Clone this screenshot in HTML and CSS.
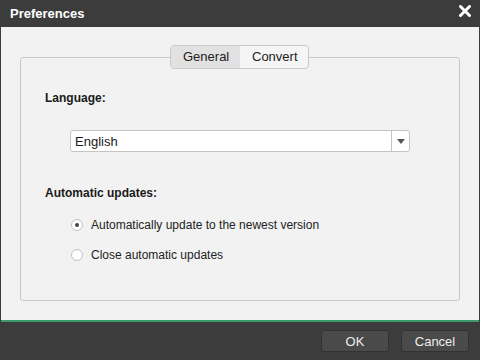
FILE: index.html
```html
<!DOCTYPE html>
<html lang="en">
<head>
    <meta charset="UTF-8">
    <title>Preferences</title>
    <link rel="stylesheet" href="styles.css">
</head>
<body>
    <div class="dialog">
        <div class="titlebar">
            <span class="title">Preferences</span>
            <svg class="close" width="12" height="12" viewBox="0 0 12 12">
                <path d="M1.5 1.5 L10.5 10.5 M10.5 1.5 L1.5 10.5" stroke="#fff" stroke-width="3" stroke-linecap="round"/>
            </svg>
        </div>

        <div class="content">
            <div class="tabs">
                <div class="tab active">General</div>
                <div class="tab">Convert</div>
            </div>

            <div class="group">
                <div class="label">Language:</div>
                <div class="select">
                    <span class="select-value">English</span>
                    <span class="select-arrow"></span>
                </div>

                <div class="label updates">Automatic updates:</div>
                <label class="radio">
                    <span class="dot checked"></span>
                    Automatically update to the newest version
                </label>
                <label class="radio">
                    <span class="dot"></span>
                    Close automatic updates
                </label>
            </div>
        </div>

        <div class="footer">
            <button class="btn">OK</button>
            <button class="btn">Cancel</button>
        </div>
    </div>
</body>
</html>
```

FILE: styles.css
```css
body {
    margin: 0;
    font-family: 'Liberation Sans', Arial, sans-serif;
    font-size: 12px;
    color: #1a1a1a;
    background: #3c3c3c;
}

.dialog {
    width: 480px;
    height: 360px;
    display: flex;
    flex-direction: column;
    background: #3c3c3c;
}

.titlebar {
    height: 27px;
    display: flex;
    align-items: center;
    justify-content: space-between;
    padding: 0 9px 0 10px;
    color: #fff;
}

.title {
    font-weight: bold;
    font-size: 13px;
}

.close {
    margin-top: -5px;
}

.content {
    height: 295px;
    margin: 0 1px;
    background: #f2f2f2;
    border-bottom: 2px solid #3a9a6a;
    padding: 18px 19px 0;
    box-sizing: border-box;
    position: relative;
}

.tabs {
    position: absolute;
    top: 18px;
    left: 169px;
    display: flex;
    border: 1px solid #c9c9c9;
    border-radius: 4px;
    overflow: hidden;
    background: #f5f5f5;
    z-index: 1;
}

.tab {
    height: 22px;
    line-height: 22px;
    padding: 0 12px;
    font-size: 13px;
    color: #222;
}

.tab.active {
    background: #e1e1e1;
    width: 45px;
}

.tab + .tab {
    width: 44px;
}

.group {
    margin-top: 12px;
    height: 244px;
    border: 1px solid #c8c8c8;
    border-radius: 3px;
    box-sizing: border-box;
    padding: 33px 24px 0;
}

.label {
    font-weight: bold;
}

.select {
    margin: 25px 0 0 25px;
    width: 340px;
    height: 22px;
    box-sizing: border-box;
    background: #fff;
    border: 1px solid #c4c4c4;
    border-radius: 3px;
    display: flex;
    align-items: center;
    justify-content: space-between;
}

.select-value {
    padding-left: 4px;
    font-size: 13px;
}

.select-arrow {
    width: 17px;
    height: 20px;
    border-left: 1px solid #c4c4c4;
    display: flex;
    align-items: center;
    justify-content: center;
}

.select-arrow::after {
    content: "";
    border-left: 4px solid transparent;
    border-right: 4px solid transparent;
    border-top: 5px solid #555;
}

.updates {
    margin-top: 34px;
}

.radio {
    display: flex;
    align-items: center;
    margin-left: 26px;
    height: 30px;
    font-size: 12px;
    color: #222;
}

.updates + .radio {
    margin-top: 10px;
}

.dot {
    width: 10px;
    height: 10px;
    border: 1px solid #c2c2c2;
    border-radius: 50%;
    background: #fff;
    margin-right: 8px;
    display: flex;
    align-items: center;
    justify-content: center;
}

.dot.checked::after {
    content: "";
    width: 4px;
    height: 4px;
    border-radius: 50%;
    background: #444;
}

.footer {
    flex: 1;
    display: flex;
    justify-content: flex-end;
    align-items: center;
    gap: 12px;
    padding-right: 11px;
}

.btn {
    width: 68px;
    height: 22px;
    background: #4a4a4a;
    border: 1px solid #333;
    border-radius: 3px;
    color: #eee;
    font-family: 'Liberation Sans', Arial, sans-serif;
    font-size: 13px;
    padding: 0;
}
```
